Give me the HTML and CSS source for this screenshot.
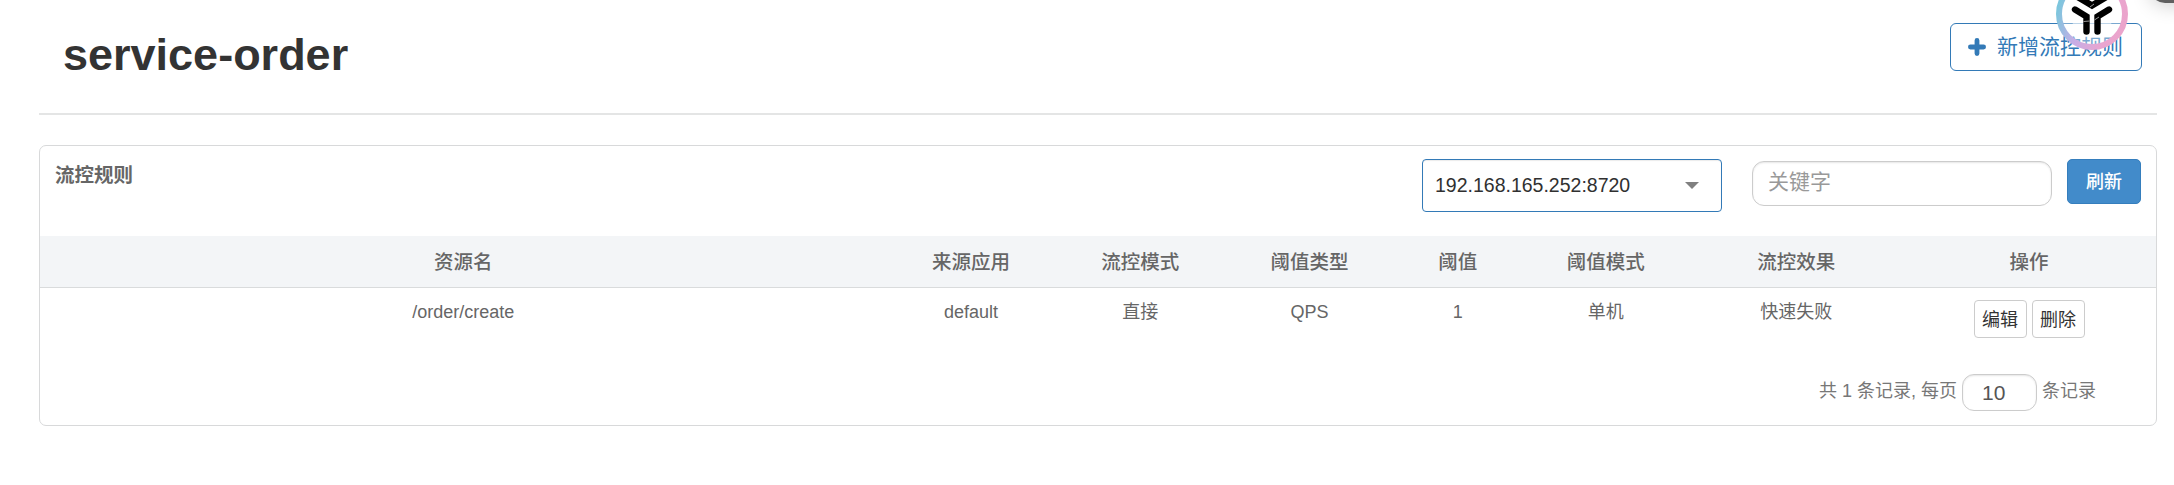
FILE: index.html
```html
<!DOCTYPE html>
<html lang="zh-CN">
<head>
<meta charset="utf-8">
<title>service-order</title>
<link rel="stylesheet" href="styles.css">
</head>
<body>
<header class="page-head">
  <h1 class="title">service-order</h1>
  <button class="btn-add"><svg class="plus" viewBox="0 0 18 18"><path d="M9 2.4V15.6M2.4 9H15.6" stroke="currentColor" stroke-width="4.8" stroke-linecap="round"/></svg><span>新增流控规则</span></button>
</header>
<main class="card">
  <div class="card-head">
    <span class="card-title">流控规则</span>
    <div class="tools">
      <div class="select"><span>192.168.165.252:8720</span><i class="caret"></i></div>
      <input class="keyword" placeholder="关键字">
      <button class="btn-refresh">刷新</button>
    </div>
  </div>
  <table class="rules">
    <colgroup><col class="w40"><col class="w8"><col class="w8"><col class="w8"><col class="w6"><col class="w8"><col class="w10"><col class="w12"></colgroup>
    <thead><tr><th>资源名</th><th>来源应用</th><th>流控模式</th><th>阈值类型</th><th>阈值</th><th>阈值模式</th><th>流控效果</th><th>操作</th></tr></thead>
    <tbody><tr><td>/order/create</td><td>default</td><td>直接</td><td>QPS</td><td>1</td><td>单机</td><td>快速失败</td><td><div class="actions"><button class="btn-sm">编辑</button><button class="btn-sm">删除</button></div></td></tr></tbody>
  </table>
  <footer class="pager"><span>共 1 条记录, 每页</span><input class="page-size" value="10"><span>条记录</span></footer>
</main>
<svg class="badge" viewBox="0 0 72 72">
  <defs><linearGradient id="ring" x1="0" y1="0.35" x2="1" y2="0.65"><stop offset="0" stop-color="#7cc6dd"/><stop offset="0.35" stop-color="#c5aee6"/><stop offset="0.75" stop-color="#e9a5d0"/><stop offset="1" stop-color="#eba4cb"/></linearGradient></defs>
  <circle cx="36" cy="36" r="33" fill="#fff" fill-opacity="0.35" stroke="url(#ring)" stroke-width="6"/>
  <circle cx="36" cy="33" r="23" fill="#fff" fill-opacity="0.5"/>
  <g stroke="#000" stroke-width="6.4" fill="none" stroke-linecap="round"><path d="M20 18L36 27.5L52 18M19 31.5L30.5 38.5V53.5M53 31.5L41.5 38.5V53.5"/></g>
  <path d="M27.5 43.5L33.7 43M38.4 42L43 39M34 29L38 26" stroke="#aaa" stroke-width="0.9"/>
</svg>
<div class="corner"></div>
</body>
</html>
```
FILE: styles.css
```css
* { box-sizing: border-box; }
body { margin: 0; height: 485px; padding: 0 17px 0 39px; position: relative; overflow: hidden; background: #fff; color: #666; font: 18px "Liberation Sans", "Noto Sans CJK SC", sans-serif; }
button, input { font-family: inherit; margin: 0; }
.page-head { height: 115px; border-bottom: 2px solid #e4e5e5; display: flex; justify-content: space-between; align-items: flex-start; padding: 23px 15px 0 24px; }
.title { margin: 6px 0 0; font-size: 45px; line-height: 52px; color: #333; }
.btn-add { width: 192px; height: 48px; border: 1px solid #337ab7; border-radius: 6px; background: #fff; color: #337ab7; font-size: 21px; line-height: 46px; padding: 0 0 0 17px; display: flex; align-items: center; gap: 11px; white-space: nowrap; }
.plus { width: 18px; height: 18px; flex: none; }
.card { margin-top: 30px; height: 281px; border: 1px solid #d8d9da; border-radius: 7px; }
.card-head { height: 90px; display: flex; justify-content: space-between; padding: 13px 15px 0; }
.card-title { font-size: 19.5px; font-weight: 700; line-height: 32px; }
.tools { display: flex; align-items: flex-start; }
.select { width: 300px; height: 53px; border: 1px solid #337ab7; border-radius: 4px; box-shadow: inset 0 1px 1px rgba(0,0,0,.08); color: #303030; font-size: 19.5px; line-height: 51px; padding: 0 22px 0 12px; display: flex; align-items: center; justify-content: space-between; }
.caret { border: 7px solid transparent; border-top-color: #808080; border-bottom: 0; }
.keyword { width: 300px; height: 45px; margin: 2px 15px 0 30px; border: 1px solid #ccc; border-radius: 12px; box-shadow: inset 0 1px 2px rgba(0,0,0,.1); padding: 0 15px 3px; font-size: 21px; }
.keyword::placeholder { color: #999; }
.btn-refresh { width: 74px; height: 45px; border: 1px solid #357ebd; border-radius: 5px; background: #428bca; color: #fff; font-size: 18px; font-weight: 500; padding: 0 0 4px; }
.rules { width: 100%; table-layout: fixed; border-collapse: separate; border-spacing: 0; text-align: center; }
.w40 { width: 40%; } .w12 { width: 12%; } .w10 { width: 10%; } .w8 { width: 8%; } .w6 { width: 6%; }
th { height: 52px; padding: 0 0 3px; background: #f3f5f7; border-bottom: 1px solid #d9dbdc; font-size: 19.5px; font-weight: 500; }
td { height: 72px; padding: 12px 0 0; vertical-align: top; line-height: 24px; }
.actions { display: flex; justify-content: center; gap: 5px; }
.btn-sm { width: 53px; height: 38px; border: 1px solid #ccc; border-radius: 4px; background: #fff; color: #333; font-size: 18px; padding: 0 0 2px; }
.pager { display: flex; justify-content: flex-end; gap: 5px; padding: 14px 60px 0 0; line-height: 34px; color: #777; }
.page-size { width: 75px; height: 37px; border: 1px solid #ccc; border-radius: 12px; box-shadow: inset 0 1px 2px rgba(0,0,0,.1); color: #555; font-size: 21px; padding: 0 19px; }
.badge { position: absolute; left: 2056px; top: -22px; width: 72px; height: 72px; }
.corner { position: absolute; left: 2150px; top: -45px; width: 60px; height: 48px; border-radius: 15px; background: #606060; box-shadow: 0 2px 20px rgba(0,0,0,.2); }
```
